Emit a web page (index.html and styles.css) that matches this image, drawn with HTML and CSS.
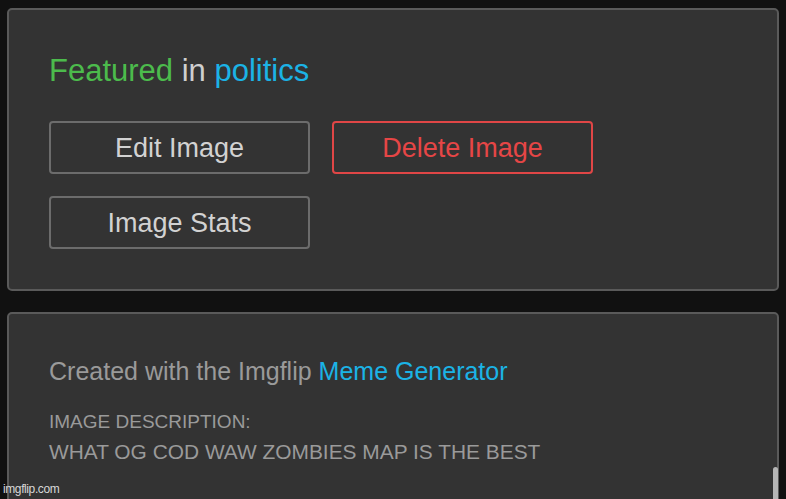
FILE: index.html
```html
<!DOCTYPE html>
<html>
<head>
<meta charset="utf-8">
<link rel="stylesheet" href="styles.css">
</head>
<body>
<div class="page">
  <section class="card card-top">
    <h2 class="featured"><span class="green">Featured</span> in <span class="blue">politics</span></h2>
    <div class="btn-grid">
      <button class="btn">Edit Image</button>
      <button class="btn btn-danger">Delete Image</button>
      <button class="btn">Image Stats</button>
    </div>
  </section>
  <section class="card card-bottom">
    <p class="created">Created with the Imgflip <span class="blue">Meme Generator</span></p>
    <p class="desc-label">IMAGE DESCRIPTION:</p>
    <p class="desc">WHAT OG COD WAW ZOMBIES MAP IS THE BEST</p>
  </section>
</div>
<div class="watermark">imgflip.com</div>
<div class="scroll-thumb"></div>
</body>
</html>
```
FILE: styles.css
```css
html, body {
  margin: 0;
  padding: 0;
  background: #111111;
  height: 100%;
  overflow: hidden;
}
body {
  font-family: "Liberation Sans", Arial, sans-serif;
  position: relative;
}
.page {
  padding: 8px 7px 0 7px;
  display: flex;
  flex-direction: column;
  gap: 21px;
}
.card {
  background: #333333;
  border: 2px solid #5a5a5a;
  border-radius: 5px;
}
.card-top {
  padding: 43px 40px 40px 40px;
}
.featured {
  margin: 0;
  font-weight: normal;
  font-size: 31px;
  line-height: 36px;
  color: #cfcfcf;
}
.green { color: #4cbb4c; }
.blue { color: #1bb3e6; }
.btn-grid {
  margin-top: 32px;
  display: grid;
  grid-template-columns: 261px 261px;
  grid-auto-rows: 53px;
  column-gap: 22px;
  row-gap: 22px;
}
.btn {
  font-family: "Liberation Sans", Arial, sans-serif;
  font-size: 27px;
  background: transparent;
  color: #d2d2d2;
  border: 2px solid #6c6c6c;
  border-radius: 4px;
  padding: 2px 0 0 0;
  margin: 0;
}
.btn-danger {
  color: #e64646;
  border-color: #e04646;
}
.card-bottom {
  padding: 42px 40px 60px 40px;
}
.created {
  margin: 0;
  font-size: 25px;
  line-height: 30px;
  color: #9a9a9a;
}
.desc-label {
  margin: 25px 0 0 0;
  font-size: 19px;
  line-height: 22px;
  color: #9a9a9a;
}
.desc {
  margin: 8px 0 0 0;
  font-size: 20.9px;
  line-height: 22px;
  color: #9a9a9a;
}
.watermark {
  position: absolute;
  left: 3px;
  top: 482px;
  font-size: 12px;
  color: #d8d8d8;
  letter-spacing: -0.4px;
}
.scroll-thumb {
  position: absolute;
  left: 773px;
  top: 467px;
  width: 5px;
  height: 40px;
  border-radius: 3px;
  background: #b5b5b5;
}
```
